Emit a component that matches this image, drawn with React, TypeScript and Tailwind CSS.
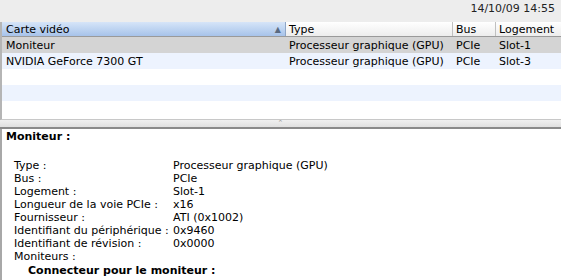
import React from "react";

const font = { fontFamily: '"Lucida Grande", "DejaVu Sans", sans-serif' };

const rows = [
  { name: "Moniteur", type: "Processeur graphique (GPU)", bus: "PCIe", slot: "Slot-1", bg: "bg-[#d4d4d4]" },
  { name: "NVIDIA GeForce 7300 GT", type: "Processeur graphique (GPU)", bus: "PCIe", slot: "Slot-3", bg: "bg-[#edf3fe]" },
  { name: "", type: "", bus: "", slot: "", bg: "bg-white" },
  { name: "", type: "", bus: "", slot: "", bg: "bg-[#edf3fe]" },
  { name: "", type: "", bus: "", slot: "", bg: "bg-white" },
];

const details: [string, string][] = [
  ["Type :", "Processeur graphique (GPU)"],
  ["Bus :", "PCIe"],
  ["Logement :", "Slot-1"],
  ["Longueur de la voie PCIe :", "x16"],
  ["Fournisseur :", "ATI (0x1002)"],
  ["Identifiant du périphérique :", "0x9460"],
  ["Identifiant de révision :", "0x0000"],
  ["Moniteurs :", ""],
];

export default function App() {
  return (
    <div className="w-[561px] h-[280px] overflow-hidden bg-[#ededed] text-[11px] text-black leading-[13px]" style={font}>
      <div className="h-[22px] flex items-start justify-end pr-[6px] pt-[2px]">
        <span className="text-[#222]">14/10/09 14:55</span>
      </div>
      <div className="h-[98px] bg-white border-l-2 border-[#b5b5b5] border-b border-b-[#c8c8c8] overflow-hidden">
        <div className="h-[15px] flex border-b border-[#9a9a9a]">
          <div className="w-[284px] flex items-center justify-between pl-[4px] pr-[4px] bg-gradient-to-b from-[#d6e5f8] to-[#a7c3ea] border-r border-[#8fa6c6]">
            <span>Carte vidéo</span>
            <span className="text-[8px] text-[#5a6a80]">▲</span>
          </div>
          <div className="w-[167px] flex items-center pl-[3px] bg-gradient-to-b from-white to-[#ededed] border-r border-[#c0c0c0]">Type</div>
          <div className="w-[43px] flex items-center pl-[3px] bg-gradient-to-b from-white to-[#ededed] border-r border-[#c0c0c0]">Bus</div>
          <div className="flex-1 flex items-center pl-[3px] bg-gradient-to-b from-white to-[#ededed]">Logement</div>
        </div>
        {rows.map((r, i) => (
          <div key={i} className={`h-[16px] flex items-center ${r.bg}`}>
            <div className="w-[284px] pl-[4px]">{r.name}</div>
            <div className="w-[167px] pl-[3px]">{r.type}</div>
            <div className="w-[43px] pl-[3px]">{r.bus}</div>
            <div className="flex-1 pl-[3px]">{r.slot}</div>
          </div>
        ))}
      </div>
      <div className="h-[9px] bg-gradient-to-b from-[#f0f0f0] to-[#e0e0e0] border-b-2 border-[#8a8a8a] flex items-center justify-center">
        <span className="text-[7px] text-[#999] leading-none">⌃</span>
      </div>
      <div className="h-[151px] bg-white border-l-2 border-[#a8a8a8] pl-[4px] pt-[1px]">
        <div className="font-bold">Moniteur :</div>
        <div className="h-[16px]" />
        {details.map(([k, v]) => (
          <div key={k} className="flex pl-[8px]">
            <div className="w-[159px]">{k}</div>
            <div>{v}</div>
          </div>
        ))}
        <div className="pl-[22px] pt-[1px] font-bold">Connecteur pour le moniteur :</div>
      </div>
    </div>
  );
}
